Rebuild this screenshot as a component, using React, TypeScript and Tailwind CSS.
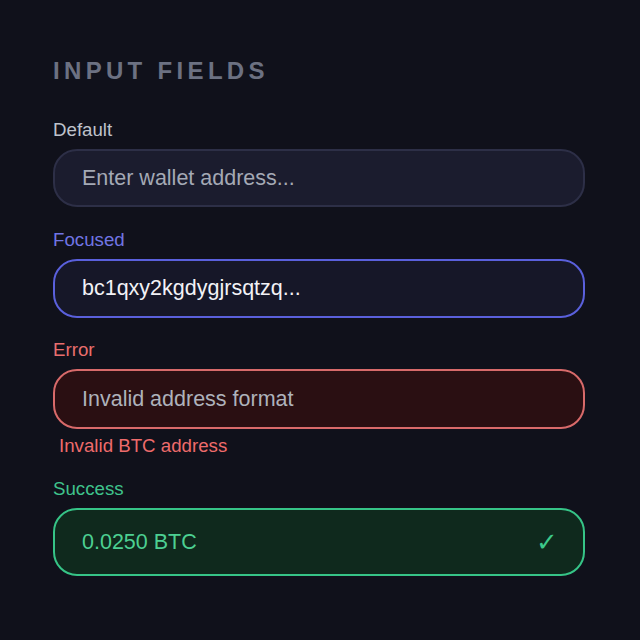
import React from 'react';

type Variant = 'default' | 'focused' | 'error' | 'success';

const styles: Record<Variant, { label: string; box: string; text: string }> = {
  default: {
    label: 'text-[#bfc3cc]',
    box: 'h-[58px] bg-[#1b1c2e] border-[#2d2f47]',
    text: 'text-[#a4a9b5]',
  },
  focused: {
    label: 'text-[#7075e4]',
    box: 'h-[59px] bg-[#161728] border-[#5a60dc]',
    text: 'text-[#f2f2f6]',
  },
  error: {
    label: 'text-[#e86e6e]',
    box: 'h-[60px] bg-[#2a0f12] border-[#d86a6a]',
    text: 'text-[#aeb2bb]',
  },
  success: {
    label: 'text-[#3fc38c]',
    box: 'h-[68px] bg-[#0f291d] border-[#36c487]',
    text: 'text-[#4cd092]',
  },
};

function Field({ variant, label, value, hint, top }: { variant: Variant; label: string; value: string; hint?: string; top: string }) {
  const s = styles[variant];
  return (
    <div className={`flex flex-col ${top}`}>
      <span className={`text-[18.7px] leading-[20px] mb-[9px] ${s.label}`}>{label}</span>
      <div className={`flex items-center justify-between rounded-[24px] border-2 pl-[27px] pr-[25px] ${s.box}`}>
        <span className={`text-[21.5px] ${s.text}`}>{value}</span>
        {variant === 'success' && <span className="text-[26px] text-[#3cc88a]">✓</span>}
      </div>
      {hint && <span className="text-[18.7px] leading-[20px] mt-[7px] ml-[6px] text-[#ee6b6b]">{hint}</span>}
    </div>
  );
}

export default function App() {
  return (
    <div className="w-[640px] h-[640px] bg-[#10111b] pl-[53px] pr-[55px] pt-[57px] font-['Liberation_Sans',Arial,sans-serif]">
      <h2 className="text-[24px] leading-[28px] font-bold uppercase tracking-[0.18em] text-[#6c7182]">
        Input Fields
      </h2>
      <Field top="mt-[35px]" variant="default" label="Default" value="Enter wallet address..." />
      <Field top="mt-[23px]" variant="focused" label="Focused" value="bc1qxy2kgdygjrsqtzq..." />
      <Field top="mt-[22px]" variant="error" label="Error" value="Invalid address format" hint="Invalid BTC address" />
      <Field top="mt-[23px]" variant="success" label="Success" value="0.0250 BTC" />
    </div>
  );
}
